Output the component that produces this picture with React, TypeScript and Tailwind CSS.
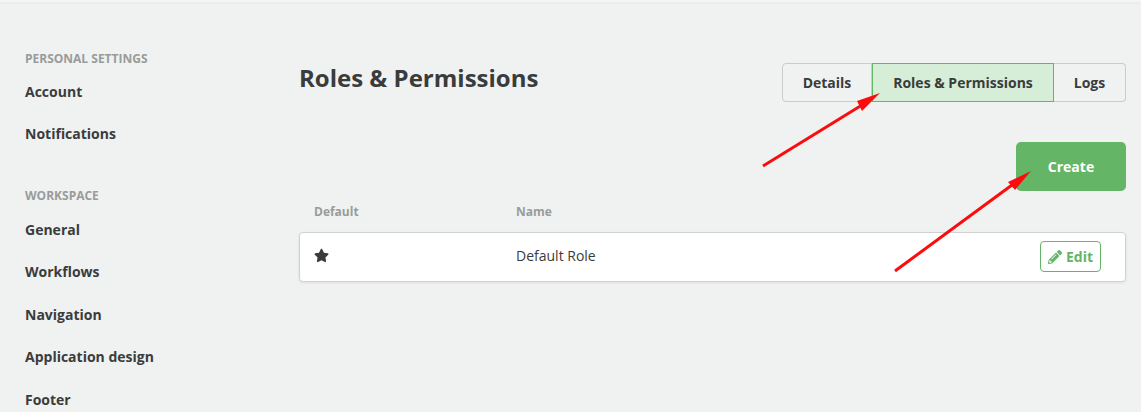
import React from 'react'
import { FaPencilAlt, FaStar } from 'react-icons/fa'

const personal = ['Account', 'Notifications']
const workspace = ['General', 'Workflows', 'Navigation', 'Application design', 'Footer']

function SideGroup({ title, items, listClass }: { title: string; items: string[]; listClass: string }) {
  return (
    <div>
      <div className="text-[12px] leading-[16px] font-bold uppercase text-[#999b9b]">{title}</div>
      <ul className={listClass}>
        {items.map((item) => (
          <li key={item} className="h-[42.5px] flex items-center text-[14px] font-bold text-[#3a3c3c]">
            {item}
          </li>
        ))}
      </ul>
    </div>
  )
}

function Arrows() {
  return (
    <svg className="absolute inset-0 pointer-events-none" width="1141" height="412" viewBox="0 0 1141 412">
      <line x1="763" y1="166" x2="862" y2="105" stroke="#fb0d0d" strokeWidth="3" />
      <polygon points="880,93 857,101 862,111" fill="#fb0d0d" />
      <line x1="895" y1="271" x2="1012" y2="185" stroke="#fb0d0d" strokeWidth="3" />
      <polygon points="1031,171 1008,182 1015,190" fill="#fb0d0d" />
    </svg>
  )
}

export default function App() {
  return (
    <div className="relative w-[1141px] h-[412px] overflow-hidden bg-[#f0f2f1] font-['Open_Sans',sans-serif] text-[#3a3c3c]">
      <div className="h-[2px] bg-[#f4f5f5] shadow-[0_1px_3px_rgba(0,0,0,0.05)]" />
      <div className="flex">
        <aside className="w-[299px] shrink-0 pl-[25px] pt-[49px]">
          <SideGroup title="Personal Settings" items={personal} listClass="mt-[3px]" />
          <div className="mt-[33px]">
            <SideGroup title="Workspace" items={workspace} listClass="mt-[4px]" />
          </div>
        </aside>
        <main className="w-[827px] pt-[61px]">
          <div className="flex justify-between items-start">
            <h1 className="text-[24px] leading-[30px] font-bold">Roles &amp; Permissions</h1>
            <div className="flex h-[39px] text-[14px] font-bold">
              <div className="w-[90px] pb-[1px] flex items-center justify-center border border-[#c9cccb] rounded-l-[4px]">Details</div>
              <div className="w-[182px] pb-[1px] flex items-center justify-center border border-[#65b567] bg-[#d6eed8]">Roles &amp; Permissions</div>
              <div className="w-[72px] pb-[1px] flex items-center justify-center border border-l-0 border-[#c9cccb] rounded-r-[4px]">Logs</div>
            </div>
          </div>
          <div className="flex justify-end mt-[40px]">
            <button className="w-[110px] h-[49px] rounded-[5px] bg-[#65b567] text-white text-[14px] font-bold">Create</button>
          </div>
          <div className="flex mt-[13px] pl-[15px] text-[12px] leading-[16px] font-bold text-[#999b9b]">
            <div className="w-[202px]">Default</div>
            <div>Name</div>
          </div>
          <div className="flex items-center mt-[12px] h-[50px] pl-[14px] pr-[24px] bg-white border border-[#d0d2d1] rounded-[4px] shadow-[0_1px_3px_rgba(0,0,0,0.08)]">
            <div className="w-[202px] mb-[3px]">
              <FaStar className="text-[15px] text-[#3a3c3c]" />
            </div>
            <div className="flex-1 text-[14px] mb-[3px]">Default Role</div>
            <button className="flex items-center justify-center gap-[4px] w-[61px] h-[31px] mb-[1px] border border-[#65b567] rounded-[4px] text-[#65b567] text-[14px] font-bold">
              <FaPencilAlt className="text-[14px]" />
              Edit
            </button>
          </div>
        </main>
      </div>
      <Arrows />
    </div>
  )
}
